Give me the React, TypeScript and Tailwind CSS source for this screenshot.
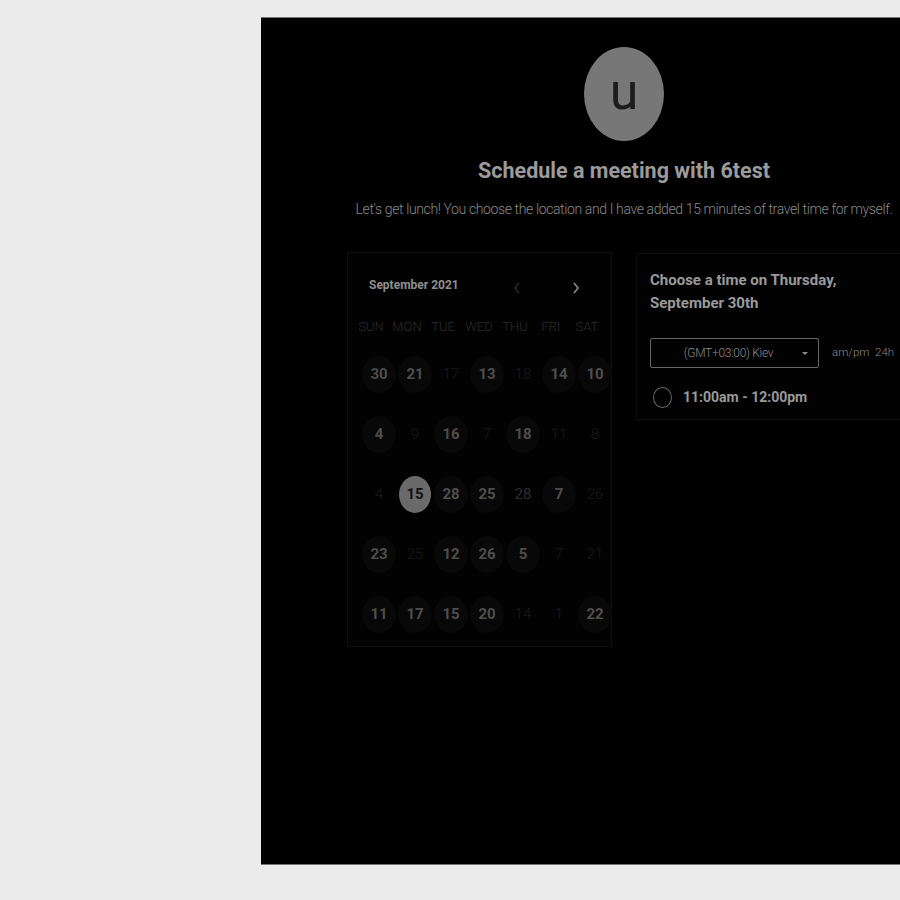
import React from "react";

type D = { n: number; s: "b" | "f" | "m" | "sel" };

const rows: D[][] = [
  [
    { n: 30, s: "b" },
    { n: 21, s: "b" },
    { n: 17, s: "f" },
    { n: 13, s: "b" },
    { n: 18, s: "f" },
    { n: 14, s: "b" },
    { n: 10, s: "b" },
  ],
  [
    { n: 4, s: "b" },
    { n: 9, s: "f" },
    { n: 16, s: "b" },
    { n: 7, s: "f" },
    { n: 18, s: "b" },
    { n: 11, s: "f" },
    { n: 8, s: "f" },
  ],
  [
    { n: 4, s: "f" },
    { n: 15, s: "sel" },
    { n: 28, s: "b" },
    { n: 25, s: "b" },
    { n: 28, s: "m" },
    { n: 7, s: "b" },
    { n: 26, s: "f" },
  ],
  [
    { n: 23, s: "b" },
    { n: 25, s: "f" },
    { n: 12, s: "b" },
    { n: 26, s: "b" },
    { n: 5, s: "b" },
    { n: 7, s: "f" },
    { n: 21, s: "f" },
  ],
  [
    { n: 11, s: "b" },
    { n: 17, s: "b" },
    { n: 15, s: "b" },
    { n: 20, s: "b" },
    { n: 14, s: "f" },
    { n: 1, s: "f" },
    { n: 22, s: "b" },
  ],
];

function Day({ d }: { d: D }) {
  if (d.s === "sel")
    return (
      <div className="flex h-[37px] w-[32px] items-center justify-center rounded-[50%] bg-[#6a6a6a] text-[15px] font-bold text-[#111]">
        {d.n}
      </div>
    );
  if (d.s === "b")
    return (
      <div className="flex h-[37px] w-[34px] items-center justify-center rounded-[50%] bg-[#080808] text-[15px] font-bold text-[#4e4e4e]">
        {d.n}
      </div>
    );
  if (d.s === "m")
    return (
      <div className="flex h-[37px] w-[34px] items-center justify-center text-[15px] font-normal text-[#2e2e2e]">
        {d.n}
      </div>
    );
  return (
    <div className="flex h-[37px] w-[34px] items-center justify-center text-[15px] font-light text-[#1a1a1a]">
      {d.n}
    </div>
  );
}

export default function App() {
  const days = ["SUN", "MON", "TUE", "WED", "THU", "FRI", "SAT"];
  return (
    <div
      className="h-[900px] w-[900px] overflow-hidden bg-[#ebebeb] pl-[261px] pt-[17px]"
      style={{ fontFamily: "Roboto, 'Noto Sans', sans-serif" }}
    >
      <div className="flex h-[848px] w-[726px] flex-col items-center border-t border-b border-[#777] bg-black">
        <div className="mt-[29px] flex h-[94px] w-[80px] items-center justify-center rounded-[50%] bg-[#777]">
          <span className="text-[52px] leading-none text-[#1c1c1c] -mt-[4px]">u</span>
        </div>
        <h1 className="mt-[16px] text-[21.5px] font-bold leading-[28px] text-[#9b9b9b]">
          Schedule a meeting with 6test
        </h1>
        <p className="mt-[14px] text-[14px] font-light leading-[20px] tracking-[-0.38px] text-[#8a8a8a]">
          Let's get lunch! You choose the location and I have added 15 minutes of travel time for myself.
        </p>
        <div className="mt-[33px] flex w-full items-start pl-[86px]">
          <div className="h-[395px] w-[265px] border border-[#101010] bg-[#020202]">
            <div className="flex items-center pl-[21px] pt-[22px]">
              <span className="w-[130px] text-[12px] font-bold text-[#8e8e8e]">September 2021</span>
              <svg width="10" height="14" viewBox="0 0 10 14" className="ml-[13px] mt-[6px]">
                <path d="M7 2 L3 7 L7 12" stroke="#2a2a2a" strokeWidth="1.5" fill="none" />
              </svg>
              <svg width="10" height="14" viewBox="0 0 10 14" className="ml-[49px] mt-[6px]">
                <path d="M3 2 L7 7 L3 12" stroke="#8a8a8a" strokeWidth="1.6" fill="none" />
              </svg>
            </div>
            <div className="mt-[22px] grid grid-cols-[repeat(7,36px)] pl-[5px]">
              {days.map((d) => (
                <div key={d} className="text-center text-[13px] font-light text-[#2c2c2c]">
                  {d}
                </div>
              ))}
            </div>
            <div className="mt-[19px] flex flex-col gap-[23px] pl-[13px]">
              {rows.map((r, i) => (
                <div key={i} className="grid grid-cols-[repeat(7,36px)] justify-items-center">
                  {r.map((d, j) => (
                    <Day key={j} d={d} />
                  ))}
                </div>
              ))}
            </div>
          </div>
          <div className="ml-[24px] mt-[1px] h-[167px] w-[300px] border border-[#0e0e0e] bg-[#020202] pl-[13px] pt-[15px]">
            <div className="text-[15px] font-bold leading-[23px] text-[#9a9a9a]">
              Choose a time on Thursday,
              <br />
              September 30th
            </div>
            <div className="mt-[23px] flex items-center">
              <div className="relative flex h-[30px] w-[169px] items-center justify-center rounded-[2px] border border-[#666] pr-[12px] text-[12px] font-light tracking-[-0.3px] text-[#8a8a8a]">
                (GMT+03:00) Kiev
                <span className="absolute right-[10px] top-[13px] h-0 w-0 border-x-[3px] border-t-[3px] border-x-transparent border-t-[#8a8a8a]" />
              </div>
              <span className="ml-[13px] text-[11.5px] font-light text-[#888]">am/pm&nbsp;&nbsp;24h</span>
            </div>
            <div className="mt-[19px] flex items-center">
              <span className="ml-[3px] h-[21px] w-[19px] rounded-[50%] border border-[#666]" />
              <span className="ml-[11px] text-[14px] font-bold text-[#999]">11:00am - 12:00pm</span>
            </div>
          </div>
        </div>
      </div>
    </div>
  );
}
